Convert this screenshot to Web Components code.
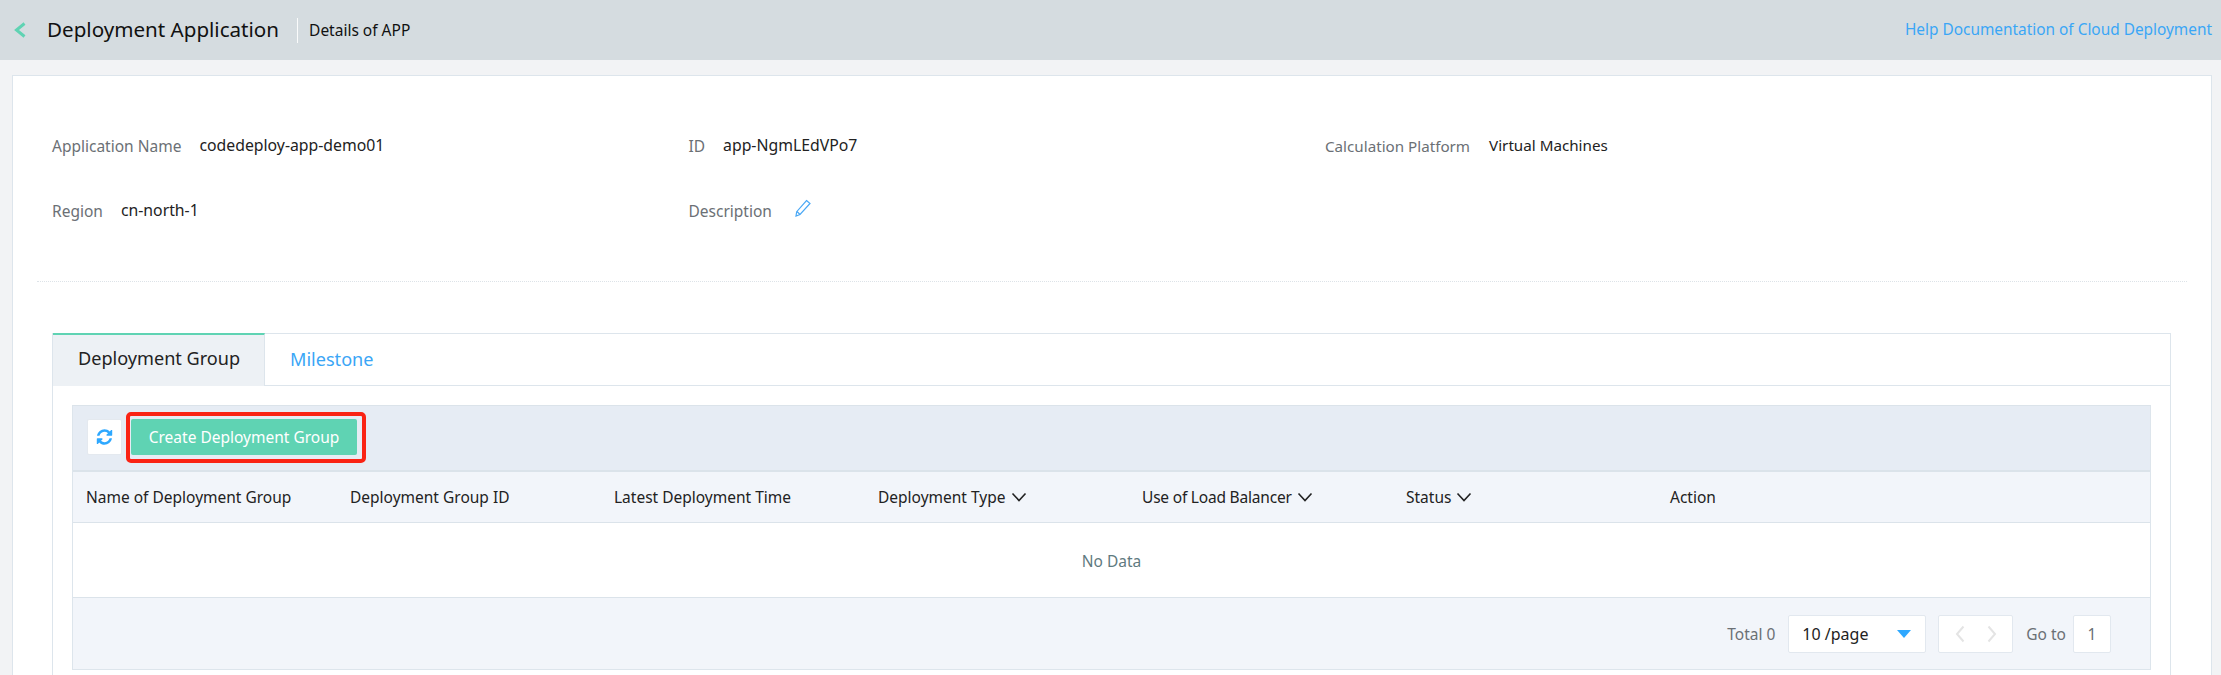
<!DOCTYPE html>
<html><head><meta charset="utf-8"><title>Details of APP</title>
<style>
html,body{margin:0;height:675px;overflow:hidden;background:#f2f3f5;font-family:"Noto Sans","Open Sans",sans-serif;font-size:15.5px;color:#222}
</style></head><body>
<app-header heading="Deployment Application" sub="Details of APP" link="Help Documentation of Cloud Deployment"></app-header>
<detail-card>
  <info-grid>
    <info-item label="Application Name">codedeploy-app-demo01</info-item>
    <info-item label="ID">app-NgmLEdVPo7</info-item>
    <info-item label="Calculation Platform" style="--ls:15.2px;--gap:19px;font-size:15.2px">Virtual Machines</info-item>
    <info-item label="Region">cn-north-1</info-item>
    <info-item label="Description" edit></info-item>
  </info-grid>
  <tab-box>
    <data-table></data-table>
  </tab-box>
</detail-card>
<script>
function def(name,html){
  customElements.define(name,class extends HTMLElement{
    constructor(){super();this.attachShadow({mode:'open'});}
    connectedCallback(){this.shadowRoot.innerHTML=typeof html==='function'?html(this):html;}
  });
}
def('app-header',h=>`<style>
:host{display:flex;align-items:center;height:60px;background:#d5dce0;padding:0 9px 0 14px;box-sizing:border-box}
svg{display:block;width:12px;height:16px;margin-right:21px}
h1{margin:0 0 2px;font-size:20.6px;font-weight:400;color:#111;line-height:28px;white-space:nowrap}
.sep{width:1px;height:25px;background:#fafbfb;margin:0 11px 0 18px}
.sub{color:#111;font-size:15.5px;flex:1;white-space:nowrap}
a{color:#3aa6f6;font-size:15.4px;text-decoration:none;white-space:nowrap;margin-bottom:1px}
</style>
<svg viewBox="0 0 12 16"><path d="M10.500 1.500 2.500 8l8 6.500" fill="none" stroke="#5fd3b3" stroke-width="3"/></svg>
<h1>${h.getAttribute('heading')}</h1><span class="sep"></span><span class="sub">${h.getAttribute('sub')}</span><a href="#">${h.getAttribute('link')}</a>`);
def('detail-card',`<style>
:host{display:block;box-sizing:border-box;margin:15px 9px 0 12px;height:600px;overflow:hidden;background:#fff;border:1px solid #dde5ec;border-bottom:0;padding:59px 0 0}
</style><slot></slot>`);
def('info-grid',`<style>
:host{display:grid;grid-template-columns:636.5px 636.5px 1fr;row-gap:45px;margin:0 24px;padding:0 15px 61px;border-bottom:1px dotted #dde3e8;box-sizing:border-box}
</style><slot></slot>`);
def('info-item',h=>`<style>
:host{display:flex;line-height:20px;height:20px;color:#222;font-size:15.8px;white-space:nowrap}
.l{color:#6b7075;margin-right:var(--gap,18px);padding-top:1px;font-size:var(--ls,15.5px)}
svg{width:18px;height:18px;margin-left:4px;margin-top:-1px}
</style><span class="l">${h.getAttribute('label')}</span>${h.hasAttribute('edit')?`<svg viewBox="0 0 18 18"><path d="M12.500 1.500 16 4.500 6 15.500 2 17l.7-4.300zM3 12.500l3 3" fill="none" stroke="#4aa8f5" stroke-width="1.2"/></svg>`:'<slot></slot>'}`);
def('tab-box',`<style>
:host{display:block;margin:51px 40px 0 39px;border:1px solid #dde5ec;border-bottom:0;box-sizing:border-box;height:342px}
.tabs{display:flex;height:52px;border-bottom:1px solid #dde5ec;box-sizing:border-box;font-size:18.1px;line-height:50px;white-space:nowrap}
.tab{padding:0 25px;box-sizing:border-box}
.on{width:212px;background:#edf1f5;border-top:2px solid #5fd3b3;border-right:1px solid #dde5ec;color:#222;line-height:47px;margin-top:-1px;height:53px}
.off{color:#3aa6f6}
.body{padding:19px 19px 0}
</style><div class="tabs"><div class="tab on">Deployment Group</div><div class="tab off">Milestone</div></div><div class="body"><slot></slot></div>`);
const chev=`<svg viewBox="0 0 16 10" style="width:16px;height:10px;margin-left:5px;flex:none"><path d="M1.500 1.500 8 8.500l6.500-7" fill="none" stroke="#222" stroke-width="1.6"/></svg>`;
def('data-table',`<style>
:host{display:block;border:1px solid #dde5ec;border-top-color:#dbe3ea;background:#fff;box-sizing:border-box;height:265px}
.bar{display:flex;align-items:center;height:66px;background:#e6ecf4;border-bottom:2px solid #dbe3ea;box-sizing:border-box;padding:0 0 2px 14px}
.refresh{width:35px;height:36px;background:#fff;border:1px solid #e4e9ef;border-radius:2px;box-sizing:border-box;display:flex;align-items:center;justify-content:center;margin-right:9px}
.refresh svg{width:17px;height:18px}
.wrap{position:relative}
.create{display:block;border:0;width:226px;height:36px;border-radius:2px;background:#5fd3b3;color:#fff;font:15.5px "Noto Sans","Open Sans",sans-serif;padding:0}
.mark{position:absolute;inset:-7px -9px -8px -5px;border:4px solid #fa2314;border-radius:5px;box-sizing:border-box}
.head{display:grid;grid-template-columns:repeat(6,264px) 1fr;height:51px;background:#f2f5fa;border-bottom:1px solid #dbe3ea;box-sizing:border-box;padding-left:13px;align-items:center;white-space:nowrap}
.head span{display:flex;align-items:center}
.empty{height:75px;padding-top:1px;display:flex;align-items:center;justify-content:center;color:#5f7a80;border-bottom:1px solid #dbe3ea;box-sizing:border-box}
.foot{height:71px;background:#f2f5fa;box-sizing:border-box;display:flex;align-items:center;justify-content:flex-end;padding-right:39px;color:#6b7075;white-space:nowrap}
.box{height:38px;background:#fff;border:1px solid #e2e8ef;border-radius:2px;box-sizing:border-box;display:flex;align-items:center}
.sel{width:138px;margin:0 12px 0 13px;padding:0 14px 0 13px;color:#222;justify-content:space-between;font-size:16px}
.sel i{width:0;height:0;border:7px solid transparent;border-top:8px solid #2ea8ff;border-bottom:0}
.pg{width:75px;margin-right:13px;justify-content:space-around;padding:0 5px}
.pg svg{width:10px;height:18px}
.go{width:38px;margin-left:7px;justify-content:center}
</style>
<div class="bar"><div class="refresh"><svg viewBox="0 0 1536 1792"><path fill="#2ea8ff" d="M1511 1056q0 5-1 7-64 268-268 434.500t-478 166.500q-146 0-282.500-55t-243.500-157l-129 129q-19 19-45 19t-45-19-19-45v-448q0-26 19-45t45-19h448q26 0 45 19t19 45-19 45l-137 137q71 66 161 102t187 36q134 0 250-65t186-179q11-17 53-117 8-23 30-23h192q13 0 22.500 9.500t9.500 22.500zm25-800v448q0 26-19 45t-45 19h-448q-26 0-45-19t-19-45 19-45l138-138q-148-137-349-137-134 0-250 65t-186 179q-11 17-53 117-8 23-30 23h-199q-13 0-22.500-9.500t-9.500-22.500v-7q65-268 270-434.500t480-166.500q146 0 284 55.500t245 156.500l130-129q19-19 45-19t45 19 19 45z"/></svg></div><div class="wrap"><button class="create">Create Deployment Group</button><div class="mark"></div></div></div>
<div class="head"><span>Name of Deployment Group</span><span>Deployment Group ID</span><span>Latest Deployment Time</span><span>Deployment Type${chev}</span><span style="letter-spacing:-.2px">Use of Load Balancer${chev}</span><span>Status${chev}</span><span>Action</span></div>
<div class="empty">No Data</div>
<div class="foot"><span>Total 0</span><div class="box sel"><span>10 /page</span><i></i></div><div class="box pg"><svg viewBox="0 0 10 18"><path d="M8.500 1.500 2 9l6.500 7.500" fill="none" stroke="#e4e4e4" stroke-width="2"/></svg><svg viewBox="0 0 10 18"><path d="M1.500 1.500 8 9l-6.500 7.500" fill="none" stroke="#e4e4e4" stroke-width="2"/></svg></div><span>Go to</span><div class="box go">1</div></div>`);
</script></body></html>
